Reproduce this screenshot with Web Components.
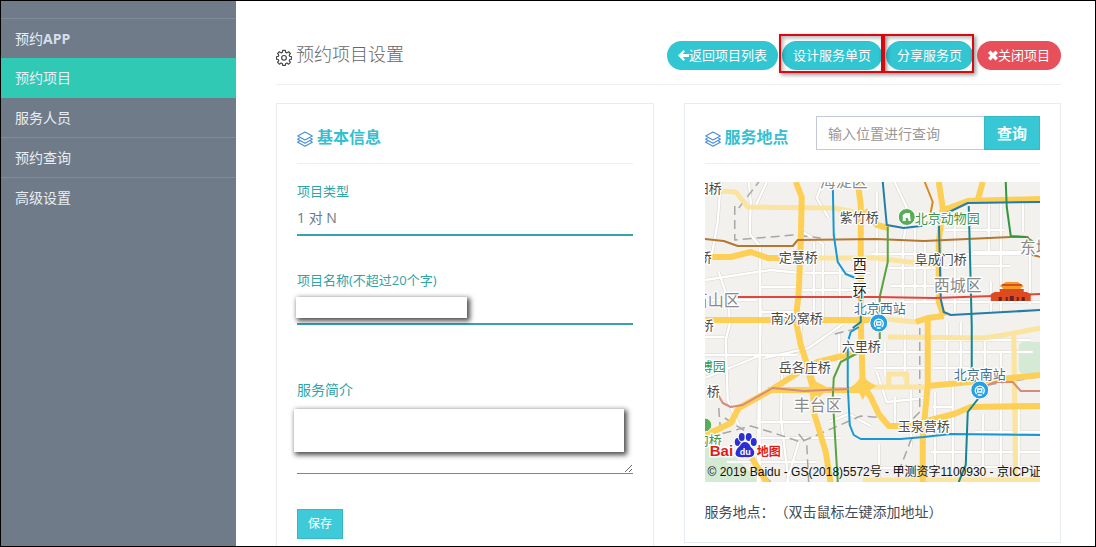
<!DOCTYPE html>
<html lang="zh-CN">
<head>
<meta charset="utf-8">
<meta name="viewport" content="width=device-width, initial-scale=1">
<title>预约项目设置</title>
<style>
  body { margin: 0; font-family: "Open Sans", "Noto Sans CJK SC", sans-serif; font-size: 14px; color: #4b5a6a; }
</style>
</head>
<body>
<app-shell>
  <side-nav slot="nav">
    <nav-item>预约<b>APP</b></nav-item>
    <nav-item active>预约项目</nav-item>
    <nav-item>服务人员</nav-item>
    <nav-item>预约查询</nav-item>
    <nav-item>高级设置</nav-item>
  </side-nav>
  <page-header>
    预约项目设置
    <pill-button slot="actions" icon="back">返回项目列表</pill-button>
    <pill-button slot="actions" marked>设计服务单页</pill-button>
    <pill-button slot="actions" marked>分享服务页</pill-button>
    <pill-button slot="actions" icon="close" tone="danger">关闭项目</pill-button>
  </page-header>
  <panel-card heading="基本信息"><basic-form></basic-form></panel-card>
  <panel-card heading="服务地点">
    <place-search slot="tools"></place-search>
    <city-map></city-map>
    <place-note>服务地点：（双击鼠标左键添加地址）</place-note>
  </panel-card>
</app-shell>

<script>
const define = (name, html, setup) => customElements.define(name, class extends HTMLElement {
  constructor() {
    super();
    this.attachShadow({ mode: "open" }).innerHTML = "<style>*{box-sizing:border-box}:host{display:block;box-sizing:border-box}</style>" + html;
  }
  connectedCallback() { if (setup) setup(this, this.shadowRoot); }
});

define("app-shell", `
<style>
  :host { display: flex; height: 100vh; border: 1px solid #000; background: #fff; }
  nav { flex: 0 0 235px; background: #6f7b88; }
  main { flex: 1; min-width: 0; padding: 0 34px 20px 40px; overflow: auto; scrollbar-width: none;
    display: grid; grid-template-columns: 1fr 1fr; column-gap: 30px; row-gap: 18px; align-items: start; align-content: start; }
  ::slotted(page-header) { grid-column: 1 / -1; }
</style>
<nav aria-label="主菜单"><slot name="nav"></slot></nav><main><slot></slot></main>`);

define("side-nav", `
<style>:host { padding-top: 17px; } div { border-top: 1px solid #7f8c99; }</style>
<div><slot></slot></div>`);

define("nav-item", `
<style>
  a { display: flex; align-items: center; height: 40px; padding: 0 14px; border-bottom: 1px solid #7f8c99;
    color: #e8eef5; text-decoration: none; line-height: 20px; }
  :host(:first-child) a { height: 39px; border-bottom: 0; }
  :host(:last-child) a { border-bottom-color: transparent; }
  :host([active]) a { background: #2fc9b4; border-bottom-color: #2fc9b4; }
  ::slotted(b) { font-weight: 700; color: #d5dfea; }
</style>
<a href="#"><slot></slot></a>`);

define("page-header", `
<style>
  :host { display: flex; align-items: center; justify-content: space-between; height: 84px; padding-top: 26px; border-bottom: 1px solid #eee; }
  h1 { display: flex; align-items: center; gap: 4px; margin: 0 0 3px; font-size: 18px; font-weight: 300; line-height: 24px; color: #666; }
  svg { width: 16px; height: 17px; margin-top: 6px; }
  div { display: flex; gap: 4px; }
</style>
<h1><svg viewBox="0 0 18 18" fill="none" stroke="#444" stroke-width="1.3" stroke-linejoin="round" aria-hidden="true">
<path d="M7.5 1h3l.4 2.2 1.4.6 1.9-1.3 2 2-1.3 1.9.6 1.4 2.1.4v2.6l-2.1.4-.6 1.4 1.3 1.9-2 2-1.9-1.3-1.4.6-.4 2.1h-3l-.4-2.1-1.4-.6-1.9 1.3-2-2 1.3-1.9-.6-1.4-2-.4V8.200l2-.4.6-1.400-1.300-1.900 2-2 1.900 1.300 1.400-.6z"/><circle cx="9" cy="9.400" r="2.700"/></svg><slot></slot></h1>
<div><slot name="actions"></slot></div>`);

define("pill-button", `
<style>
  :host { position: relative; }
  button { display: flex; align-items: center; height: 29px; padding: 0 11px 2px; border: 0; border-radius: 15px;
    background: #32c5d2; color: #fff; font: inherit; font-size: 13px; line-height: 18px; white-space: nowrap; }
  :host([tone=danger]) button { background: #e7505a; }
  svg { display: none; width: 11px; height: 11px; margin-top: 2px; fill: #fff; }
  :host([icon=back]) .back, :host([icon=close]) .close { display: block; }
  .close { width: 10px; }
  :host([marked])::after { content: ""; position: absolute; inset: -7px -1px -3px -3px; border: 2px solid #d8090f;
    box-shadow: 2px 2px 4px rgba(0,0,0,.4), inset 2px 2px 4px rgba(0,0,0,.3); pointer-events: none; }
</style>
<button type="button">
<svg class="back" viewBox="0 0 11 11" aria-hidden="true"><path d="M5.500 0 7 1.500 4.700 4H11v3H4.700L7 9.500 5.500 11 0 5.500z"/></svg>
<svg class="close" viewBox="0 0 10 10" aria-hidden="true"><path d="M2.500 0 5 2.500 7.500 0 10 2.500 7.500 5 10 7.500 7.500 10 5 7.500 2.500 10 0 7.500 2.500 5 0 2.500z"/></svg>
<slot></slot></button>`);

define("panel-card", `
<style>
  :host { border: 1px solid #e7ecf1; padding: 0 20px 20px; min-width: 0; }
  header { display: flex; align-items: center; justify-content: space-between; height: 60px; border-bottom: 1px solid #eee; margin-bottom: 18px; }
  h2 { display: flex; align-items: center; gap: 4px; margin: 6px 0 0; font-size: 16px; line-height: 22px; font-weight: 700; color: #36bfd0; white-space: nowrap; }
  svg { width: 16px; height: 16px; margin-top: 4px; }
</style>
<header><h2><svg viewBox="0 0 16 16" fill="none" stroke="#4a90d9" stroke-width="1.2" stroke-linejoin="round" aria-hidden="true">
<path d="M8 1 15.300 5 8 9 .7 5z"/><path d="M2.500 7 .7 8.200 8 12.200l7.300-4L13.500 7M2.500 10 .7 11.300 8 15.300l7.300-4-1.800-1.300"/></svg><span></span></h2>
<slot name="tools"></slot></header><slot></slot>`,
(el, root) => { root.querySelector("span").textContent = el.getAttribute("heading"); });

define("basic-form", `
<style>
  form { display: flex; flex-direction: column; }
  .field { position: relative; margin-bottom: 35px; }
  .field.wide { margin-bottom: 56px; }
  label { display: block; font-size: 13px; line-height: 18px; color: #2fa3a6; }
  .intro label { font-size: 14px; }
  input, textarea { display: block; width: 100%; height: 36px; padding: 0; border: 0; border-bottom: 2px solid #36a3ae;
    border-radius: 0; background: none; outline: 0; font: inherit; line-height: 20px; color: #6b7a89; }
  textarea { height: 75px; border-bottom: 1px solid #36a3ae; resize: vertical; }
  .cover { position: absolute; background: #fff; box-shadow: 2px 2px 5px 1px rgba(0,0,0,.7); }
  .name { left: -1px; top: 26px; width: 171px; height: 21px; }
  .text { left: -3px; right: 9px; top: 28px; height: 43px; }
  button { align-self: flex-start; height: 30px; padding: 0 10px; border: 1px solid #35b9c6; background: #3fcad9; color: #fff; font: inherit; font-size: 12px; line-height: 18px; }
</style>
<form>
  <div class="field"><label for="kind">项目类型</label><input id="kind" value="1 对 N" readonly></div>
  <div class="field wide"><label for="name">项目名称(不超过20个字)</label><input id="name"><div class="cover name"></div></div>
  <div class="field intro"><label for="intro">服务简介</label><textarea id="intro"></textarea><div class="cover text"></div></div>
  <button type="button">保存</button>
</form>`);

define("place-search", `
<style>
  form { display: flex; width: 224px; height: 34px; margin-bottom: 1px; }
  input { flex: 1; min-width: 0; padding: 0 11px; border: 1px solid #c2cad8; border-right: 0; border-radius: 0; outline: 0; font: inherit; color: #555; }
  input::placeholder { color: #999; opacity: 1; }
  button { width: 56px; padding: 0 0 2px; border: 1px solid #35b9c6; background: #38c7d5; color: #fff; font: inherit; font-size: 15px; font-weight: 700; }
</style>
<form><input type="text" aria-label="位置" placeholder="输入位置进行查询"><button type="button">查询</button></form>`);

define("place-note", `
<style>p { margin: 20px 0 0; line-height: 20px; color: #3f4c5a; text-spacing-trim: space-all; }</style><p><slot></slot></p>`);

define("city-map", `
<style>
  :host { position: relative; height: 300px; overflow: hidden; background: #f3f1ed; }
  svg { display: block; width: 100%; height: 100%; }
  text { font-family: "Noto Sans CJK SC", sans-serif; font-size: 13px; fill: #4a4a4a; stroke: #fff; stroke-width: 2.500px; paint-order: stroke; stroke-linejoin: round; }
  .area { font-size: 16px; fill: #8a8a8a; }
  .station { fill: #3f7193; }
  .park { fill: #3c9448; }
  .ring { font-size: 14px; fill: #222; }
  .logo { font-family: "Liberation Sans", "Noto Sans CJK SC", sans-serif; font-weight: 700; fill: #de1c1c; stroke-width: 3px; }
  small { position: absolute; left: 3px; bottom: 1px; font: 12px/18px "Liberation Sans", "Noto Sans CJK SC", sans-serif; color: #111; white-space: nowrap; }
</style>
<svg viewBox="0 0 336 300" preserveAspectRatio="xMidYMid slice" fill="none" role="img" aria-label="北京地图">
  <defs><path id="streets" d="M16 0l-3 40-6 33M44 0l2 20-1 32 10 12 1 74-2 70-1 92M55 62v240M14 90l10 30 1 22-4 16 2 60 12 28M0 98l26-4 40-6 30 3M56 105h36M56 130h40M0 173h92M0 196l54-22M118 0l-6 16 12 20M98 50l20 12v80M100 91h66M98 108h68M109 60v80M135 84v56M172 10v120M190 0l14 30-6 32v74M210 44v94M220 60v60M166 72h168M184 86h60M186 104h50M196 120h140M250 20v110M284 20v50M296 20v110M318 20v30M240 48h60M268 70h60M240 100h26M266 84h40M286 100v30M325 60v62M60 176l44-10 34-24M78 175l-2 60 8 66M52 240h54M56 256h80M96 143v30M134 150v30M124 240l20-8 22 12M166 170h56M180 160v34M200 148v50M170 186h50M228 158h98M228 170h100M242 140v60M228 186h36M256 140v48M280 156v40M296 170v124M172 190l10 30 38-4M190 215v26M206 205v60M230 210v84M248 204v96M226 270h110M174 262v34M166 286h60M278 232v64M314 226v70M270 250h66M228 225h20M262 285h70M62 0l-12 26M0 118h52M0 155h20M22 280h90M94 260l-12 40"/></defs>
  <g fill="#d5ead5"><path d="M0 264l30 10 24 26H0z"/><rect x="314" y="160" width="24" height="32" rx="5"/></g>
  <use href="#streets" stroke="#dad7d2" stroke-width="3.500"/>
  <use href="#streets" stroke="#fff" stroke-width="2.300"/>
  <path stroke="#a7a7a7" stroke-width="1.500" stroke-dasharray="9 5" d="M30 24v34l58-5 28 3M34 26L54 0M14 226l2 26 30-8 20 6 30 10 60-26 25 2M20 236l22 14 4 10M94 252l8 10 2 40M215 146v84l-10 10-24 4M207 256l-14 36M283 203l50-8M130 152l24-6M50 284l16 16"/>
  <g stroke="#fbe3a0" stroke-width="5" stroke-linejoin="round">
    <path d="M14 9l17 1 12 15 86 1 42 8M76 76h95l67 8M171 136l40 4M309 150l2 152M183 155l96 1 20-3 37-7M166 205h57M184 204v-12h18v12M158 298h178"/></g>
  <g stroke="#fdcf55" stroke-width="6" stroke-linejoin="round">
    <path d="M91 0l6 15-1 45-2 50-3 28 5 25 12 37 1 30 12 40 5 32M153 0l3 23v117l2 63 8 12 8 17 10 12 22 0 16-5 27-7 17-7 70-1M234 0l4 26-4 34v60l5 14M211 140l12-4 16-2M223 136v67l-5 53v46M0 251l10-2 16-8 8-15 29-16 30-19 20-11 36-9M63 208l43 0h52l-5 0M223 204l43-4 70-7M0 75h26l20-5 17 6h13M0 138h171M160 28l12 15 12 3M239 28l24-9 73-2M278 0l-5 18M47 276l16 26"/></g>
  <path fill="#fdcf55" d="M157 190q3 9 15 14-10 4-14 14-4-10-12-13 9-5 11-15M100 188l12 12 12 6-12 12-7-12z"/>
  <g stroke-width="2" stroke-linejoin="round">
    <path stroke="#b47731" d="M0 57l19 2 14 5h55l5-6 78-1 48 2 87-4h17l5 18 8 2"/>
    <path stroke="#33963e" d="M301 0l1 25 4 29 15 1 8 5"/>
    <path stroke="#d98924" d="M220 0l8 20-2 10 8 8"/>
    <path stroke="#1698d4" d="M128 0l1 53 4 27 8 12 12 5M154 145l-8 5-3 10v43l2 40 4 10 7 4h40l23-2 27-3 90 1"/>
    <path stroke="#1c829b" d="M156 105v35l-8 6"/>
    <path stroke="#247ca8" d="M178 0l4 43 17 3 17-2 18-9 29-14 73-1M234 35l2 82 3 13 7 3 90-5"/>
    <path stroke="#138593" d="M264 24l3 120v42l7 30-11 14-2 53-7 17"/>
    <path stroke="#58a244" d="M183 45v35l-8 35v42M155 170l-19 10-7 16-1 20 5 84"/>
    <path stroke="#dc4840" d="M33 115h138l58 1 60-2 47-2"/>
    <path stroke="#d58c7c" d="M10 207l8 14 8 4 12-2 30-17 31 3 45-2M276 207l7-4 8-3h17l8 9h20"/></g>
  <g><text x="-9" y="11">田桥</text><text x="115" y="5" class="area">海淀区</text><text x="135" y="40">紫竹桥</text><text x="74" y="80">定慧桥</text><text x="-6" y="80">桥</text>
  <text x="210" y="41" class="park">北京动物园</text><text x="210" y="82">阜成门桥</text><text x="229" y="109" class="area">西城区</text><text x="315" y="71" class="area">东城区</text><text x="-13" y="124" class="area">石山区</text>
  <text class="ring"><tspan x="148" y="87">西</tspan><tspan x="148" y="101">三</tspan><tspan x="148" y="115">环</tspan></text><text x="66" y="141">南沙窝桥</text><text x="-4" y="148">桥</text>
  <text x="149" y="131" class="station">北京西站</text><text x="137" y="169">六里桥</text><text x="74" y="190">岳各庄桥</text><text x="-5" y="189" class="park">博园</text><text x="2" y="214">桥</text>
  <text x="89" y="229" class="area">丰台区</text><text x="249" y="197" class="station">北京南站</text><text x="193" y="249">玉泉营桥</text><text x="-9" y="263" class="park">沟桥</text></g>
  <g stroke="#fff"><circle cx="202" cy="35" r="8.500" fill="#59ad57"/><path fill="#fff" stroke="none" d="M198 39v-6l3-2h4l1 8h-2l-1-3h-2v3z"/><circle cx="0" cy="243" r="7" fill="#59ad57"/>
    <circle cx="174" cy="141" r="9" fill="#27a1e3"/><path stroke-width="1.300" d="M171 145a4.500 4.500 0 1 1 6 0M172 143v-3h4v3zM172 146h4"/>
    <circle cx="275" cy="208" r="9" fill="#27a1e3"/><path stroke-width="1.300" d="M272 212a4.500 4.500 0 1 1 6 0M273 210v-3h4v3zM273 213h4"/></g>
  <g><path fill="#f39b24" d="M295 104l6-4h12l6 4-3 2v4h-18v-4z"/><path fill="#dd4a20" d="M297 102h20v2h-20zM295 107h24v3h-24zM290 110h32l4 2v7h-40v-7z"/><path fill="#6b2220" d="M294 115h3v4h-3zM301 115h2v4h-2zM305 114h4v5h-4zM312 115h2v4h-2zM317 115h3v4h-3z"/></g>
  <text class="logo" x="5" y="274" style="font-size:15px">Bai</text>
  <g fill="#2b2fd3" stroke="#fff" stroke-width="2" paint-order="stroke"><ellipse cx="33" cy="260" rx="3" ry="4"/><ellipse cx="37" cy="255" rx="3" ry="4"/><ellipse cx="44" cy="255" rx="3" ry="4"/><ellipse cx="49" cy="260" rx="3" ry="4"/><path d="M40 260q4 0 6 5 5 4 3 8-2 3-9 2-7 1-9-2-1-5 4-9 2-4 5-4z"/></g>
  <text x="35" y="273" style="font:700 9px 'Liberation Sans',sans-serif;fill:#fff;stroke:none">du</text>
  <text class="logo" x="52" y="274" style="font-size:12px">地图</text>
</svg>
<small>© 2019 Baidu - GS(2018)5572号 - 甲测资字1100930 - 京ICP证</small>`);
</script>
</body>
</html>
